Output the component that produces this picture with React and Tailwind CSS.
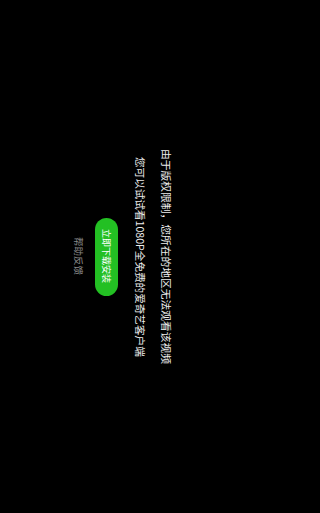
import React from "react";

const App = () => {
  return (
    <div className="w-full min-h-[513px] bg-black">
      <div
        className="w-[261px] h-[513px] bg-black overflow-hidden flex flex-col items-center justify-start pr-[82px] [writing-mode:vertical-rl] [text-orientation:sideways]"
        style={{ fontFamily: '"Noto Sans CJK SC", "Noto Sans", sans-serif' }}
      >
        <p className="w-[26px] leading-[26px] text-[10.75px] text-[#ededed] text-center whitespace-nowrap">
          由于版权限制，您所在的地区无法观看该视频
        </p>
        <p className="w-[26px] leading-[26px] text-[10.6px] text-[#ededed] text-center whitespace-nowrap">
          您可以试试看1080P全免费的爱奇艺客户端
        </p>
        <button className="mr-[9px] w-[23px] h-[78px] rounded-full bg-[#23c023] text-white text-[9px] leading-[23px] flex items-center justify-center">
          立即下载安装
        </button>
        <span className="mr-[6px] w-[20px] leading-[20px] text-[9.5px] text-[#8a8a8a] text-center whitespace-nowrap">
          帮助反馈
        </span>
      </div>
    </div>
  );
};

export default App;
